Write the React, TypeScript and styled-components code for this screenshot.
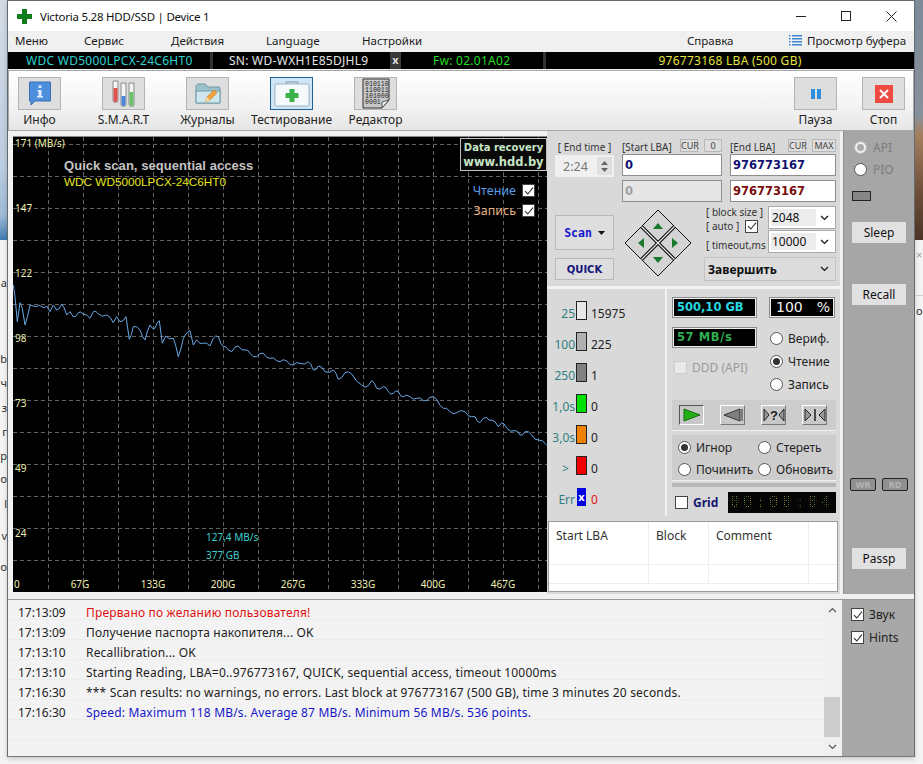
import React from "react"
import styled, { createGlobalStyle } from "styled-components"

const uiFont = `"Noto Sans", "Open Sans", sans-serif`
const monoBold = `"DejaVu Sans Mono", monospace`

const GlobalStyle = createGlobalStyle`
    html, body {
        margin: 0;
        padding: 0;
        background: #f4f4f4;
    }
    body {
        font-family: ${uiFont};
        font-size: 12px;
        color: #1c1c1c;
    }
`

const Page = styled.div`
    width: 923px;
    height: 764px;
    display: flex;
    overflow: hidden;
    background: #f4f4f4;
`

const LeftEdge = styled.div`
    width: 7px;
    display: flex;
    flex-direction: column;
    overflow: hidden;
`

const DesktopPhoto = styled.div`
    height: 240px;
    flex: none;
    background: linear-gradient(180deg, #d4dbe6 0%, #bccde0 70%, #9dbad5 90%, #3f7ab0 100%);
`

const RightEdge = styled.div`
    width: 8px;
    display: flex;
    flex-direction: column;
    overflow: hidden;
`

const WallPhoto = styled.div`
    height: 240px;
    flex: none;
    background: linear-gradient(180deg, #7d8a98 0%, #87919c 48%, #a5805f 56%, #6e4f3a 80%, #4b3426 100%);
`

const BehindText = styled.div<{ $gap: number }>`
    margin-top: ${p => p.$gap}px;
    height: 14px;
    width: 7px;
    flex: none;
    display: flex;
    justify-content: flex-end;
    line-height: 14px;
    font-size: 11px;
    color: #333;
    white-space: nowrap;
`

const BehindMark = styled.div<{ $gap: number; $color: string }>`
    margin-top: ${p => p.$gap}px;
    height: 14px;
    flex: none;
    padding-left: 1px;
    line-height: 14px;
    font-size: 11px;
    color: ${p => p.$color};
`

const BehindRule = styled.div<{ $gap: number }>`
    margin-top: ${p => p.$gap}px;
    height: 1px;
    flex: none;
    background: #cfcfcf;
`

const Window = styled.div`
    width: 908px;
    height: 757px;
    flex: none;
    display: flex;
    flex-direction: column;
    border: 1px solid #626a72;
    border-bottom: 1px solid #7a7a7a;
    box-sizing: border-box;
    background: #f0f0f0;
    box-shadow: 0 2px 5px rgba(0, 0, 0, 0.18);
`

const TitleBar = styled.div`
    height: 30px;
    flex: none;
    display: flex;
    align-items: center;
    background: #fff;
    padding-left: 9px;
`

const TitleText = styled.span`
    margin-left: 8px;
    font-size: 11.5px;
    letter-spacing: -0.25px;
    color: #111;
`

const WindowControls = styled.div`
    margin-left: auto;
    display: flex;
`

const WindowControl = styled.div`
    width: 45px;
    height: 30px;
    display: flex;
    align-items: center;
    justify-content: center;
`

const MenuBar = styled.div`
    height: 21px;
    flex: none;
    box-sizing: border-box;
    padding: 0 0 3px 7px;
    display: flex;
    align-items: center;
    background: #f0f0f0;
`

const MenuItem = styled.div<{ $width: number }>`
    width: ${p => p.$width}px;
    flex: none;
    display: flex;
    align-items: center;
    gap: 5px;
    font-size: 11.5px;
    color: #1a1a1a;
`

const DriveBar = styled.div`
    height: 17px;
    flex: none;
    display: flex;
    background: #000;
    font-size: 12px;
    letter-spacing: 0.27px;
    line-height: 17px;
    white-space: nowrap;
`

const DriveCell = styled.div<{ $width: number; $color: string; $pad?: number; $center?: boolean; $open?: boolean }>`
    width: ${p => p.$width}px;
    flex: none;
    box-sizing: border-box;
    color: ${p => p.$color};
    padding-left: ${p => p.$pad ?? 0}px;
    text-align: ${p => (p.$center ? "center" : "left")};
    border-right: ${p => (p.$open ? "0" : "3px solid #333")};
`

const EjectCell = styled.div`
    width: 11px;
    flex: none;
    background: #3a3a3a;
    color: #ddd;
    font-weight: 700;
    font-size: 11px;
    text-align: center;
    line-height: 16px;
`

const Toolbar = styled.div`
    height: 61px;
    flex: none;
    margin-top: 1px;
    display: flex;
    box-sizing: border-box;
    border: 1px solid #a8a8a8;
    padding: 6px 8px 0 9px;
    background: linear-gradient(180deg, #ffffff 0%, #f4f4f4 55%, #e6e6e6 100%);
`

const ToolGroup = styled.div`
    display: flex;
    gap: 41px;
`

const ToolGroupRight = styled(ToolGroup)`
    margin-left: auto;
    gap: 25px;
`

const ToolButton = styled.div`
    width: 43px;
    display: flex;
    flex-direction: column;
    align-items: center;
`

const ToolIcon = styled.div<{ $active?: boolean }>`
    width: 43px;
    height: 33px;
    box-sizing: border-box;
    display: flex;
    align-items: center;
    justify-content: center;
    background: ${p => (p.$active ? "#cfe5f8" : "#dedede")};
    border: 1px solid ${p => (p.$active ? "#1f5f94" : "#b4b4b4")};
`

const ToolLabel = styled.div`
    margin-top: 1px;
    font-size: 12px;
    line-height: 18px;
    white-space: nowrap;
    color: #222;
`

const Body = styled.div`
    height: 463px;
    flex: none;
    display: flex;
    background: #f2f2f2;
`

const ChartFrame = styled.div`
    width: 539px;
    flex: none;
    box-sizing: border-box;
    padding: 5px 0 2px 5px;
`

const Chart = styled.div`
    position: relative;
    width: 534px;
    height: 456px;
    background: #000;
    border-top: 1px solid #888;
    box-sizing: border-box;
    overflow: hidden;
`

const ChartTitle = styled.div`
    position: absolute;
    left: 51px;
    top: 21px;
    font-family: "Liberation Sans", sans-serif;
    font-weight: 700;
    font-size: 13px;
    letter-spacing: 0.05px;
    color: #c4c4c4;
`

const ChartDrive = styled.div`
    position: absolute;
    left: 51px;
    top: 38px;
    font-family: "Liberation Sans", sans-serif;
    font-size: 11.75px;
    color: #e6e61e;
`

const Promo = styled.div`
    position: absolute;
    right: 0;
    top: 1px;
    width: 87px;
    height: 33px;
    box-sizing: border-box;
    padding-top: 2px;
    border: 1px solid #c4c4c4;
    font-family: "DejaVu Sans", sans-serif;
    font-weight: 700;
    text-align: center;
    color: #c6e4c6;
    background: #0a0a0a;
`

const PromoSmall = styled.div`
    font-size: 10px;
    line-height: 14px;
`

const PromoBig = styled.div`
    font-size: 11.5px;
    line-height: 15px;
`

const LegendRow = styled.div<{ $top: number; $color: string }>`
    position: absolute;
    right: 12px;
    top: ${p => p.$top}px;
    display: flex;
    align-items: center;
    gap: 6px;
    font-size: 12.5px;
    color: ${p => p.$color};
`

const SpeedNote = styled.div<{ $top: number }>`
    position: absolute;
    left: 193px;
    top: ${p => p.$top}px;
    font-size: 10px;
    line-height: 14px;
    color: #3ccfcf;
`

const ControlColumn = styled.div`
    width: 293px;
    flex: none;
    display: flex;
    flex-direction: column;
    background: #d9d9d9;
`

const ScanPanel = styled.div`
    height: 158px;
    flex: none;
    box-sizing: border-box;
    padding-top: 8px;
    border-bottom: 3px solid #f2f2f2;
`

const PanelRow = styled.div`
    display: flex;
    padding-left: 8px;
`

const TimeCol = styled.div`
    width: 59px;
    flex: none;
    margin-right: 8px;
`

const LbaCol = styled.div<{ $width: number }>`
    width: ${p => p.$width}px;
    flex: none;
    margin-right: 8px;
    display: flex;
    flex-direction: column;
    gap: 4px;
`

const LbaHead = styled.div`
    height: 13px;
    display: flex;
    align-items: center;
    margin-bottom: -2px;
`

const SmallLabel = styled.span`
    font-size: 10px;
    line-height: 13px;
    color: #333;
    white-space: nowrap;
`

const HeadLabel = styled(SmallLabel)`
    padding-top: 3px;
`

const TimeLabel = styled(SmallLabel)`
    display: block;
    padding-top: 2px;
    text-align: center;
`

const TinyButton = styled.div<{ $width: number }>`
    width: ${p => p.$width}px;
    height: 13px;
    flex: none;
    margin-left: 6px;
    box-sizing: border-box;
    border: 1px solid #b8b8b8;
    background: #dedede;
    font-size: 9px;
    line-height: 11px;
    text-align: center;
    color: #444;
`

const HeadSpacer = styled.span`
    margin-left: auto;
`

const Spinner = styled.div`
    height: 22px;
    margin-top: 1px;
    box-sizing: border-box;
    display: flex;
    align-items: center;
    justify-content: space-between;
    padding: 0 2px 0 8px;
    background: #f0f0f0;
    font-size: 12.5px;
    color: #777;
`

const SpinArrows = styled.div`
    width: 15px;
    height: 18px;
    background: #e0e0e0;
    color: #666;
    display: flex;
    flex-direction: column;
    align-items: center;
    justify-content: center;
    gap: 3px;
`

const LbaInput = styled.div<{ $color: string; $disabled?: boolean }>`
    height: 22px;
    box-sizing: border-box;
    padding-left: 2px;
    border: 1px solid #8e8e8e;
    background: ${p => (p.$disabled ? "#e6e6e6" : "#fff")};
    font-family: "DejaVu Sans", sans-serif;
    font-weight: 700;
    font-size: 11.5px;
    line-height: 20px;
    color: ${p => p.$color};
`

const ActionRow = styled(PanelRow)`
    margin-top: 4px;
`

const ScanCol = styled.div`
    width: 59px;
    flex: none;
    padding-top: 9px;
    display: flex;
    flex-direction: column;
    gap: 8px;
`

const ScanButton = styled.div<{ $height: number; $color: string }>`
    height: ${p => p.$height}px;
    box-sizing: border-box;
    border: 1px solid #b8b8b8;
    background: #dedede;
    display: flex;
    align-items: center;
    justify-content: center;
    gap: 6px;
    font-family: ${monoBold};
    font-weight: 700;
    font-size: 11.5px;
    color: ${p => p.$color};
`

const QuickLabel = styled.span`
    font-family: "DejaVu Sans", sans-serif;
    font-size: 10px;
`

const Pad = styled.div`
    width: 68px;
    flex: none;
    margin: 3px 12px 0 10px;
`

const OptionCol = styled.div`
    width: 132px;
    flex: none;
`

const OptionTop = styled.div`
    display: flex;
`

const OptionLabels = styled.div`
    width: 64px;
    flex: none;
    margin-top: -1px;
    padding-left: 2px;
    box-sizing: border-box;
    display: flex;
    flex-direction: column;
`

const OptionLine = styled.div<{ $top: number }>`
    margin-top: ${p => p.$top}px;
    height: 14px;
    display: flex;
    align-items: center;
    gap: 6px;
`

const SelectStack = styled.div`
    width: 68px;
    flex: none;
    display: flex;
    flex-direction: column;
    gap: 1px;
`

const SelectBox = styled.div<{ $plain?: boolean }>`
    height: ${p => (p.$plain ? 24 : 23)}px;
    box-sizing: border-box;
    display: flex;
    align-items: center;
    justify-content: space-between;
    padding: 0 6px 0 ${p => (p.$plain ? 3 : 2)}px;
    border: 1px solid ${p => (p.$plain ? "#c4c4c4" : "#aaa")};
    background: ${p => (p.$plain ? "#dcdcdc" : "#fff")};
    font-size: 12px;
    font-weight: ${p => (p.$plain ? 700 : 400)};
    color: #111;
`

const SelectValue = styled.span`
    width: 45px;
    height: 17px;
    padding-left: 1px;
    box-sizing: border-box;
    line-height: 17px;
    background: #ececec;
`

const WideSelect = styled(SelectBox)`
    margin-top: 4px;
`

const StatusPanel = styled.div`
    height: 227px;
    flex: none;
    display: flex;
`

const BarList = styled.div`
    width: 120px;
    flex: none;
    box-sizing: border-box;
    padding-top: 6px;
    border-right: 2px solid #f2f2f2;
`

const BarRow = styled.div`
    height: 31px;
    display: flex;
    align-items: center;
`

const BarLabel = styled.span`
    width: 28px;
    flex: none;
    padding-top: 6px;
    text-align: right;
    font-size: 12px;
    color: #2f7f80;
    white-space: nowrap;
`

const BarSwatch = styled.div<{ $color: string }>`
    width: 11px;
    height: 19px;
    margin-left: 1px;
    flex: none;
    box-sizing: border-box;
    border: 1px solid #222;
    background: ${p => p.$color};
`

const ErrSwatch = styled.div`
    width: 9px;
    height: 18px;
    margin: 0 1px 0 2px;
    flex: none;
    background: #0000e0;
    color: #fff;
    font-weight: 700;
    font-size: 11px;
    line-height: 18px;
    text-align: center;
`

const BarValue = styled.span<{ $red?: boolean }>`
    margin-left: 4px;
    padding-top: 6px;
    font-size: 12px;
    color: ${p => (p.$red ? "#e01010" : "#222")};
`

const StatusRight = styled.div`
    flex: 1;
    box-sizing: border-box;
    padding: 8px 4px 0 5px;
    display: flex;
    flex-direction: column;
`

const MetricRow = styled.div`
    display: flex;
    justify-content: space-between;
    padding-right: 1px;
`

const Lcd = styled.div<{ $width: number; $color: string; $spacing?: number }>`
    width: ${p => p.$width}px;
    height: 21px;
    box-sizing: border-box;
    padding-left: 4px;
    border: 1px solid #8c8c8c;
    outline: 1px solid #eee;
    outline-offset: -2px;
    background: #000;
    font-family: "DejaVu Sans", sans-serif;
    font-weight: 700;
    font-size: 11.5px;
    letter-spacing: ${p => p.$spacing ?? 0}px;
    line-height: 19px;
    white-space: nowrap;
    color: ${p => p.$color};
`

const PercentLcd = styled(Lcd)`
    display: flex;
    justify-content: space-between;
    padding: 0 4px 0 6px;
    font-weight: 400;
    font-size: 14px;
`

const ReadMode = styled.div`
    margin-top: 9px;
    display: flex;
    justify-content: space-between;
`

const ModeLeft = styled.div`
    width: 85px;
`

const DddRow = styled.div`
    margin-top: 11px;
    padding-left: 2px;
    display: flex;
    align-items: center;
    gap: 5px;
    color: #9a9a9a;
    font-size: 12px;
`

const RadioStack = styled.div`
    width: 66px;
    display: flex;
    flex-direction: column;
`

const RadioRow = styled.div<{ $height?: number; $color?: string }>`
    height: ${p => p.$height ?? 23}px;
    display: flex;
    align-items: center;
    gap: 5px;
    font-size: 12px;
    color: ${p => p.$color ?? "#222"};
    white-space: nowrap;
`

const RadioDot = styled.span<{ $checked?: boolean; $muted?: boolean }>`
    width: 13px;
    height: 13px;
    flex: none;
    box-sizing: border-box;
    border-radius: 50%;
    border: 1px solid ${p => (p.$muted ? "#b8b8b8" : "#555")};
    background: ${p => (p.$muted ? "#eee" : "#fff")};
    display: flex;
    align-items: center;
    justify-content: center;
    &::after {
        content: "";
        width: 7px;
        height: 7px;
        border-radius: 50%;
        background: ${p => (p.$checked ? (p.$muted ? "#aaa" : "#333") : "transparent")};
    }
`

const Band = styled.div`
    background: #cdcdcd;
    border-bottom: 1px solid #f0f0f0;
    box-sizing: border-box;
`

const TransportBand = styled(Band)`
    height: 31px;
    margin-top: 4px;
    display: flex;
    align-items: center;
    gap: 16px;
    padding-left: 7px;
`

const TransportButton = styled.div<{ $active?: boolean }>`
    width: 25px;
    height: 20px;
    box-sizing: border-box;
    display: flex;
    align-items: center;
    justify-content: center;
    background: #c8c8c8;
    border-style: solid;
    border-width: 1px;
    border-color: ${p => (p.$active ? "#555 #fff #fff #555" : "#fff #777 #777 #fff")};
`

const ModeBand = styled(Band)`
    height: 46px;
    margin-top: 4px;
    display: grid;
    grid-template-columns: 80px 1fr;
    grid-auto-rows: 22px;
    padding: 1px 0 0 6px;
`

const ThinBand = styled.div`
    height: 4px;
    margin-top: 2px;
    background: #b6b6b6;
`

const GridRow = styled.div`
    margin-top: 5px;
    display: flex;
    align-items: center;
    padding-left: 3px;
`

const GridLabel = styled.span`
    margin-left: 5px;
    font-weight: 700;
    font-size: 12px;
    color: #15156e;
`

const LedClock = styled.div`
    position: relative;
    margin-left: auto;
    width: 108px;
    height: 21px;
    background: #050505;
    font-family: ${monoBold};
    font-size: 15px;
    line-height: 21px;
    letter-spacing: 4px;
    text-align: center;
    color: #8b8f3a;
    &::after {
        content: "";
        position: absolute;
        inset: 0;
        background-image:
            repeating-linear-gradient(90deg, transparent 0 1px, #050505 1px 2px),
            repeating-linear-gradient(180deg, transparent 0 1px, #050505 1px 2px);
    }
`

const BlockTable = styled.div`
    flex: 1;
    margin: 5px 2px 2px 1px;
    box-sizing: border-box;
    border: 1px solid #999;
    background: #fff;
`

const TableRow = styled.div<{ $height: number }>`
    height: ${p => p.$height}px;
    display: grid;
    grid-template-columns: 100px 60px 100px 1fr;
    border-bottom: 1px solid #eee;
`

const TableCell = styled.div`
    padding: 5px 0 0 7px;
    font-size: 12px;
    border-right: 1px solid #eee;
    color: #333;
    &:last-child {
        border-right: 0;
    }
`

const SidePanel = styled.div`
    width: 71px;
    flex: none;
    margin-left: 3px;
    box-sizing: border-box;
    padding: 5px 8px 0 8px;
    background: #a6a6a6;
    border-left: 1px solid #8c8c8c;
    display: flex;
    flex-direction: column;
`

const SideRadio = styled(RadioRow)`
    height: 22px;
    gap: 6px;
    padding-left: 2px;
    color: #7c7c7c;
`

const SideIndicator = styled.div`
    width: 19px;
    height: 10px;
    margin-top: 11px;
    box-sizing: border-box;
    border: 1px solid #222;
    background: #868686;
`

const SideButton = styled.div<{ $top: number }>`
    height: 21px;
    margin-top: ${p => p.$top}px;
    background: #e1e1e1;
    font-size: 12px;
    line-height: 21px;
    text-align: center;
    color: #111;
`

const PortRow = styled.div`
    margin-top: 173px;
    margin-left: -2px;
    display: flex;
    justify-content: space-between;
    width: 58px;
`

const PortChip = styled.div`
    width: 26px;
    height: 13px;
    box-sizing: border-box;
    border: 1px solid #222;
    border-radius: 2px;
    background: #909090;
    font-weight: 700;
    font-size: 9px;
    line-height: 11px;
    text-align: center;
    color: #b4b4b4;
`

const Footer = styled.div`
    height: 157px;
    flex: none;
    margin-top: 5px;
    box-sizing: border-box;
    border-top: 1px solid #9a9a9a;
    display: flex;
`

const LogPane = styled.div`
    width: 816px;
    flex: none;
    box-sizing: border-box;
    padding-top: 3px;
    background-color: #f3f3f3;
    background-image: repeating-linear-gradient(180deg, transparent 0 19px, #ececec 19px 20px);
`

const LogRow = styled.div<{ $color?: string }>`
    height: 20px;
    display: flex;
    font-size: 12px;
    letter-spacing: 0.17px;
    line-height: 20px;
    white-space: nowrap;
    color: ${p => p.$color ?? "#222"};
`

const LogTime = styled.span`
    width: 78px;
    flex: none;
    padding-left: 10px;
    box-sizing: border-box;
    letter-spacing: 0;
    color: #222;
`

const Scrollbar = styled.div`
    width: 16px;
    flex: none;
    display: flex;
    flex-direction: column;
    align-items: center;
    background: #f0f0f0;
    color: #555;
`

const ScrollArrow = styled.div<{ $height: number }>`
    height: ${p => p.$height}px;
    flex: none;
    display: flex;
    align-items: center;
`

const ScrollTrack = styled.div`
    flex: 1;
    width: 100%;
    display: flex;
    align-items: flex-end;
`

const ScrollThumb = styled.div`
    width: 100%;
    height: 40px;
    background: #cdcdcd;
`

const FooterSide = styled.div`
    width: 72px;
    flex: none;
    margin-left: 2px;
    box-sizing: border-box;
    padding: 3px 0 0 9px;
    background: #a8a8a8;
`

const SideCheck = styled.div`
    height: 23px;
    display: flex;
    align-items: center;
    gap: 5px;
    font-size: 12px;
    color: #222;
`

const Box = styled.span<{ $size?: number; $muted?: boolean }>`
    width: ${p => p.$size ?? 13}px;
    height: ${p => p.$size ?? 13}px;
    flex: none;
    box-sizing: border-box;
    display: inline-flex;
    align-items: center;
    justify-content: center;
    background: ${p => (p.$muted ? "#eaeaea" : "#fff")};
    border: 1px solid ${p => (p.$muted ? "#ccc" : "#444")};
`

const Check = ({ size, on = true, muted }: { size?: number; on?: boolean; muted?: boolean }) => (
    <Box $size={size} $muted={muted}>
        {on && (
            <svg width="10" height="10" viewBox="0 0 10 10" fill="none">
                <path d="M1 5.2 3.8 8 9 1.6" stroke="#333" strokeWidth="1.1" />
            </svg>
        )}
    </Box>
)

const Chevron = ({ up }: { up?: boolean }) => (
    <svg width="9" height="6" viewBox="0 0 9 6" fill="none">
        <path d={up ? "M1 5 4.5 1.5 8 5" : "M1 1 4.5 4.5 8 1"} stroke="currentColor" strokeWidth="1.2" />
    </svg>
)

const GreenCross = () => (
    <svg width="15" height="15" viewBox="0 0 15 15">
        <path d="M5 0h5v5h5v5h-5v5H5v-5H0V5h5z" fill="#0f7d1d" />
    </svg>
)

const InfoIcon = () => (
    <svg width="24" height="25" viewBox="0 0 24 25">
        <path d="M1.5 1h21v19H7l-4 4v-4H1.5z" fill="#4d8fdc" stroke="#3a6fb5" />
        <rect x="10.5" y="4.5" width="3" height="2.5" fill="#dfeeff" />
        <path d="M9.5 9h4v6h1.5v1.5H9V15h1.5v-4.500h-1z" fill="#dfeeff" />
    </svg>
)

const TubesIcon = () => (
    <svg width="28" height="28" viewBox="0 0 28 28">
        <path d="M3 1h5v19a2.500 2.500 0 0 1-5 0z" fill="#f4f4f4" stroke="#8a8a8a" />
        <path d="M3.500 8h4v12a2 2 0 0 1-4 0z" fill="#e2504e" />
        <path d="M11 3h5v21a2.500 2.500 0 0 1-5 0z" fill="#f4f4f4" stroke="#8a8a8a" />
        <path d="M11.500 16h4v8a2 2 0 0 1-4 0z" fill="#4a86d8" />
        <path d="M19 3h5v21a2.500 2.500 0 0 1-5 0z" fill="#f4f4f4" stroke="#8a8a8a" />
        <path d="M19.500 12h4v12a2 2 0 0 1-4 0z" fill="#6cc26c" />
    </svg>
)

const FolderIcon = () => (
    <svg width="26" height="24" viewBox="0 0 26 24">
        <path d="M1 5c0-2 1-3 3-3h6l3 3h11c1 0 1 1 1 1v15H1z" fill="#9cc2cc" stroke="#6f9aa6" />
        <path d="M1 9h24v12H1z" fill="#cfe6ec" stroke="#6f9aa6" />
        <path d="M10 20l2-5 7-7 3 3-7 7z" fill="#f0a23c" stroke="#c97f1d" strokeWidth="0.6" />
        <path d="M10 20l2-5 3 3z" fill="#f7e0b8" />
    </svg>
)

const CaseIcon = () => (
    <svg width="36" height="26" viewBox="0 0 36 26">
        <path d="M12 3V1h12v2" fill="none" stroke="#7d97a8" />
        <rect x="1" y="3" width="34" height="22" rx="1" fill="#f6fafc" stroke="#9bb2c2" />
        <path d="M15.500 8h5v4h4v5h-4v4h-5v-4h-4v-5h4z" fill="#38b44a" />
    </svg>
)

const BinaryIcon = () => (
    <svg width="30" height="31" viewBox="0 0 30 31">
        <path d="M2 1h26v21l-7 8H2z" fill="#c8c8c8" stroke="#333" />
        <path d="M28 22l-7 8v-6z" fill="#f2f2f2" stroke="#333" strokeWidth="0.8" />
        <text x="4" y="8" fontFamily="Liberation Mono, monospace" fontSize="6.6" fill="#222">010110</text>
        <text x="4" y="14" fontFamily="Liberation Mono, monospace" fontSize="6.6" fill="#222">110011</text>
        <text x="4" y="20" fontFamily="Liberation Mono, monospace" fontSize="6.6" fill="#222">101000</text>
        <text x="4" y="26" fontFamily="Liberation Mono, monospace" fontSize="6.6" fill="#222">0001</text>
    </svg>
)

const PauseIcon = () => (
    <svg width="12" height="12" viewBox="0 0 12 12">
        <rect x="1" y="1" width="4" height="10" fill="#2f8fe0" />
        <rect x="7" y="1" width="4" height="10" fill="#2f8fe0" />
    </svg>
)

const StopIcon = () => (
    <svg width="18" height="18" viewBox="0 0 18 18">
        <rect width="18" height="18" fill="#ee4a42" />
        <path d="M5 5l8 8M13 5l-8 8" stroke="#fff" strokeWidth="2" />
    </svg>
)

const ListIcon = () => (
    <svg width="13" height="13" viewBox="0 0 13 13" fill="#3b85d0">
        {[1, 4, 7, 10].map(y => (
            <React.Fragment key={y}>
                <rect x="0" y={y} width="1.500" height="1.500" />
                <rect x="3" y={y} width="10" height="1.500" />
            </React.Fragment>
        ))}
    </svg>
)

const MoveDiamond = () => (
    <svg width="68" height="68" viewBox="0 0 68 68" style={{ display: "block" }}>
        <path d="M34 1 67 34 34 67 1 34z" fill="#d4d4d4" stroke="#111" />
        <path d="M17.500 17.500 50.500 50.500M50.500 17.500 17.500 50.500" stroke="#111" strokeWidth="3.500" />
        <path d="M17.500 17.500 50.500 50.500M50.500 17.500 17.500 50.500" stroke="#eee" strokeWidth="1.200" />
        <path d="M34 14l5 6H29z M34 54l-5-6h10z M14 34l6-5v10z M54 34l-6-5v10z" fill="#177a2c" />
    </svg>
)

const PlayGlyph = () => (
    <svg width="18" height="14" viewBox="0 0 18 14">
        <path d="M1 1l16 6-16 6z" fill="#22b014" stroke="#14660e" />
    </svg>
)

const BackGlyph = () => (
    <svg width="20" height="14" viewBox="0 0 20 14">
        <path d="M1 7l16-6v12z" fill="#808080" stroke="#333" />
        <path d="M19 1v12" stroke="#333" />
    </svg>
)

const QueryGlyph = () => (
    <svg width="22" height="14" viewBox="0 0 22 14">
        <path d="M1 1l5 6-5 6zM21 1l-5 6 5 6z" fill="#999" stroke="#222" />
        <text x="11" y="12" textAnchor="middle" fontFamily="Liberation Sans, sans-serif" fontSize="13" fontWeight="700" fill="#222">?</text>
    </svg>
)

const MeetGlyph = () => (
    <svg width="22" height="14" viewBox="0 0 22 14">
        <path d="M1 1l6 6-6 6zM21 1l-6 6 6 6z" fill="#999" stroke="#222" />
        <path d="M11 1v12" stroke="#222" strokeWidth="1.500" />
    </svg>
)

const raw: [number, number][] = [
    [40, 465], [45, 500], [52, 575], [60, 518], [67, 535], [75, 585], [90, 525], [100, 528], [110, 530], [125, 530],
    [140, 528], [150, 545], [160, 525], [170, 540], [185, 522], [200, 555], [210, 545], [220, 560], [235, 548], [250, 553],
    [260, 555], [270, 565], [280, 545], [295, 552], [320, 555], [340, 578], [350, 560], [360, 575], [378, 560], [388, 628],
    [400, 590], [420, 600], [435, 630], [450, 585], [465, 595], [478, 572], [487, 640], [497, 618], [520, 625], [535, 680],
    [550, 625], [570, 602], [580, 645], [590, 630], [610, 640], [630, 648], [640, 625], [655, 620], [670, 650], [685, 660],
    [695, 665], [715, 648], [735, 660], [750, 670], [770, 680], [790, 670], [810, 685], [830, 692],
]

const rawEnd: [number, number][] = [
    [0, 5], [20, 3], [40, 15], [60, 10], [85, 5], [100, 30], [115, 18], [135, 35], [160, 30], [175, 58], [195, 38], [215, 42],
    [245, 75], [255, 82], [275, 62], [290, 85], [310, 80], [325, 95], [340, 100], [355, 95], [370, 110], [390, 110], [410, 115],
    [430, 122], [450, 112], [470, 118], [490, 145], [510, 155], [530, 158], [555, 155], [575, 170], [585, 170], [600, 188],
    [620, 172], [635, 180], [655, 200], [665, 188], [680, 205], [705, 212], [720, 225], [735, 215], [755, 225], [775, 240], [800, 255],
]

// zoomed-crop coordinates brought back to chart space (chart origin 13,137)
const knots = [
    ...raw.map(([x, y]) => [x / 3 - 13, y / 3 + 130 - 137]),
    ...rawEnd.map(([x, y]) => [x / 3 + 280 - 13, y / 3 + 360 - 137]),
]

// the real trace is jagged between the read points, so zigzag the long segments
const curve = knots
    .flatMap(([x, y], i) => {
        const next = knots[i + 1]
        if (!next || next[0] - x < 4) return [[x, y]]
        return [[x, y], [(x + next[0]) / 2, (y + next[1]) / 2 + (i % 2 ? 1.6 : -1.6)]]
    })
    .map(([x, y]) => `${x.toFixed(1)},${y.toFixed(1)}`)
    .join(" ")

const gridX = [35.5, 70.5, 105.5, 140.5, 175.5, 210.5, 245.5, 280.5, 315.5, 350.5, 385.5, 420.5, 455.5, 490.5, 525.5]
const gridY = [7.5, 39.5, 71.5, 103.5, 135.5, 167.5, 199.5, 231.5, 263.5, 295.5, 327.5, 359.5, 391.5, 423.5]

const yTicks = [
    { y: 75, t: "147" },
    { y: 140, t: "122" },
    { y: 205, t: "98" },
    { y: 270, t: "73" },
    { y: 335, t: "49" },
    { y: 400, t: "24" },
]

const xTicks = [
    { x: 67, t: "67G" },
    { x: 140, t: "133G" },
    { x: 210, t: "200G" },
    { x: 280, t: "267G" },
    { x: 350, t: "333G" },
    { x: 420, t: "400G" },
    { x: 490, t: "467G" },
]

const SpeedChart = () => (
    <svg width="534" height="455" viewBox="0 0 534 455" style={{ display: "block" }}>
        <g stroke="#626262" strokeWidth="1" strokeDasharray="4 3">
            {gridX.map(x => (
                <line key={x} x1={x} y1="0" x2={x} y2="455" />
            ))}
            {gridY.map(y => (
                <line key={y} x1="0" y1={y} x2="534" y2={y} />
            ))}
        </g>
        <polyline points={curve} fill="none" stroke="#6aa8e6" strokeWidth="1" />
        <g fontFamily="Noto Sans, sans-serif" fontSize="10" fill="#efefb0">
            <text x="2" y="10">171 (MB/s)</text>
            {yTicks.map(t => (
                <text key={t.t} x="2" y={t.y}>{t.t}</text>
            ))}
            <text x="1" y="451">0</text>
            {xTicks.map(t => (
                <text key={t.t} x={t.x} y="451" textAnchor="middle">{t.t}</text>
            ))}
        </g>
    </svg>
)

const logRows = [
    { time: "17:13:09", text: "Прервано по желанию пользователя!", color: "#e01010" },
    { time: "17:13:09", text: "Получение паспорта накопителя... OK" },
    { time: "17:13:10", text: "Recallibration... OK" },
    { time: "17:13:10", text: "Starting Reading, LBA=0..976773167, QUICK, sequential access, timeout 10000ms" },
    { time: "17:16:30", text: "*** Scan results: no warnings, no errors. Last block at 976773167 (500 GB), time 3 minutes 20 seconds." },
    { time: "17:16:30", text: "Speed: Maximum 118 MB/s. Average 87 MB/s. Minimum 56 MB/s. 536 points.", color: "#1616c8" },
]

const bars = [
    { label: "25", color: "#e8e8e8", value: "15975" },
    { label: "100", color: "#b0b0b0", value: "225" },
    { label: "250", color: "#808080", value: "1" },
    { label: "1,0s", color: "#00e000", value: "0" },
    { label: "3,0s", color: "#f08000", value: "0" },
    { label: ">\u00a0\u00a0", color: "#f00000", value: "0" },
]

const behind = [
    { gap: 36, text: "a" },
    { gap: 62, text: "b" },
    { gap: 10, text: "ч" },
    { gap: 11, text: "з" },
    { gap: 10, text: "г" },
    { gap: 10, text: "р" },
    { gap: 9, text: "о" },
    { gap: 11, text: "l" },
    { gap: 18, text: "v" },
    { gap: 17, text: "о" },
]

const App = () => {
    return (
        <Page>
            <GlobalStyle />
            <LeftEdge>
                <DesktopPhoto />
                {behind.map((b, i) => (
                    <BehindText key={i} $gap={b.gap}>{b.text}</BehindText>
                ))}
            </LeftEdge>
            <Window>
                <TitleBar>
                    <GreenCross />
                    <TitleText>Victoria 5.28 HDD/SSD | Device 1</TitleText>
                    <WindowControls>
                        <WindowControl>
                            <svg width="11" height="11" viewBox="0 0 11 11"><path d="M0 5.500h10" stroke="#222" /></svg>
                        </WindowControl>
                        <WindowControl>
                            <svg width="11" height="11" viewBox="0 0 11 11"><rect x="0.500" y="0.500" width="9" height="9" fill="none" stroke="#222" /></svg>
                        </WindowControl>
                        <WindowControl>
                            <svg width="11" height="11" viewBox="0 0 11 11"><path d="M0.500 0.500l10 10M10.500 0.500l-10 10" stroke="#222" /></svg>
                        </WindowControl>
                    </WindowControls>
                </TitleBar>
                <MenuBar>
                    <MenuItem $width={69}>Меню</MenuItem>
                    <MenuItem $width={87}>Сервис</MenuItem>
                    <MenuItem $width={95}>Действия</MenuItem>
                    <MenuItem $width={96}>Language</MenuItem>
                    <MenuItem $width={325}>Настройки</MenuItem>
                    <MenuItem $width={102}>Справка</MenuItem>
                    <MenuItem $width={120}><ListIcon />Просмотр буфера</MenuItem>
                </MenuBar>
                <DriveBar>
                    <DriveCell $width={205} $color="#2fd2d2" $pad={18}>WDC WD5000LPCX-24C6HT0</DriveCell>
                    <DriveCell $width={177} $color="#e6e6e6" $pad={16} $open>SN: WD-WXH1E85DJHL9</DriveCell>
                    <EjectCell>x</EjectCell>
                    <DriveCell $width={145} $color="#22dd22" $pad={32}>Fw: 02.01A02</DriveCell>
                    <DriveCell $width={368} $color="#e6e63c" $center $open>976773168 LBA (500 GB)</DriveCell>
                </DriveBar>
                <Toolbar>
                    <ToolGroup>
                        <ToolButton>
                            <ToolIcon><InfoIcon /></ToolIcon>
                            <ToolLabel>Инфо</ToolLabel>
                        </ToolButton>
                        <ToolButton>
                            <ToolIcon><TubesIcon /></ToolIcon>
                            <ToolLabel>S.M.A.R.T</ToolLabel>
                        </ToolButton>
                        <ToolButton>
                            <ToolIcon><FolderIcon /></ToolIcon>
                            <ToolLabel>Журналы</ToolLabel>
                        </ToolButton>
                        <ToolButton>
                            <ToolIcon $active><CaseIcon /></ToolIcon>
                            <ToolLabel>Тестирование</ToolLabel>
                        </ToolButton>
                        <ToolButton>
                            <ToolIcon><BinaryIcon /></ToolIcon>
                            <ToolLabel>Редактор</ToolLabel>
                        </ToolButton>
                    </ToolGroup>
                    <ToolGroupRight>
                        <ToolButton>
                            <ToolIcon><PauseIcon /></ToolIcon>
                            <ToolLabel>Пауза</ToolLabel>
                        </ToolButton>
                        <ToolButton>
                            <ToolIcon><StopIcon /></ToolIcon>
                            <ToolLabel>Стоп</ToolLabel>
                        </ToolButton>
                    </ToolGroupRight>
                </Toolbar>
                <Body>
                    <ChartFrame>
                        <Chart>
                            <SpeedChart />
                            <ChartTitle>Quick scan, sequential access</ChartTitle>
                            <ChartDrive>WDC WD5000LPCX-24C6HT0</ChartDrive>
                            <Promo>
                                <PromoSmall>Data recovery</PromoSmall>
                                <PromoBig>www.hdd.by</PromoBig>
                            </Promo>
                            <LegendRow $top={45} $color="#5b9ce6">Чтение <Check /></LegendRow>
                            <LegendRow $top={65} $color="#e2b284">Запись <Check /></LegendRow>
                            <SpeedNote $top={393}>127,4 MB/s</SpeedNote>
                            <SpeedNote $top={411}>377 GB</SpeedNote>
                        </Chart>
                    </ChartFrame>
                    <ControlColumn>
                        <ScanPanel>
                            <PanelRow>
                                <TimeCol>
                                    <TimeLabel>[ End time ]</TimeLabel>
                                    <Spinner>
                                        2:24
                                        <SpinArrows>
                                            <svg width="7" height="4" viewBox="0 0 7 4"><path d="M3.500 0 7 4H0z" fill="currentColor" /></svg>
                                            <svg width="7" height="4" viewBox="0 0 7 4"><path d="M3.500 4 0 0h7z" fill="currentColor" /></svg>
                                        </SpinArrows>
                                    </Spinner>
                                </TimeCol>
                                <LbaCol $width={100}>
                                    <LbaHead>
                                        <HeadLabel>[Start LBA]</HeadLabel>
                                        <HeadSpacer />
                                        <TinyButton $width={18}>CUR</TinyButton>
                                        <TinyButton $width={18}>0</TinyButton>
                                    </LbaHead>
                                    <LbaInput $color="#101070">0</LbaInput>
                                    <LbaInput $color="#a0a0a0" $disabled>0</LbaInput>
                                </LbaCol>
                                <LbaCol $width={106}>
                                    <LbaHead>
                                        <HeadLabel>[End LBA]</HeadLabel>
                                        <HeadSpacer />
                                        <TinyButton $width={18}>CUR</TinyButton>
                                        <TinyButton $width={24}>MAX</TinyButton>
                                    </LbaHead>
                                    <LbaInput $color="#101070">976773167</LbaInput>
                                    <LbaInput $color="#7a0c0c">976773167</LbaInput>
                                </LbaCol>
                            </PanelRow>
                            <ActionRow>
                                <ScanCol>
                                    <ScanButton $height={35} $color="#1515d0">
                                        Scan
                                        <svg width="7" height="4" viewBox="0 0 7 4"><path d="M0 0h7L3.500 4z" fill="#111" /></svg>
                                    </ScanButton>
                                    <ScanButton $height={22} $color="#14147a"><QuickLabel>QUICK</QuickLabel></ScanButton>
                                </ScanCol>
                                <Pad><MoveDiamond /></Pad>
                                <OptionCol>
                                    <OptionTop>
                                        <OptionLabels>
                                            <OptionLine $top={0}><SmallLabel>[ block size ]</SmallLabel></OptionLine>
                                            <OptionLine $top={0}><SmallLabel>[ auto ]</SmallLabel><Check /></OptionLine>
                                            <OptionLine $top={5}><SmallLabel>[ timeout,ms ]</SmallLabel></OptionLine>
                                        </OptionLabels>
                                        <SelectStack>
                                            <SelectBox><SelectValue>2048</SelectValue><Chevron /></SelectBox>
                                            <SelectBox><SelectValue>10000</SelectValue><Chevron /></SelectBox>
                                        </SelectStack>
                                    </OptionTop>
                                    <WideSelect $plain>Завершить<Chevron /></WideSelect>
                                </OptionCol>
                            </ActionRow>
                        </ScanPanel>
                        <StatusPanel>
                            <BarList>
                                {bars.map(b => (
                                    <BarRow key={b.label}>
                                        <BarLabel>{b.label}</BarLabel>
                                        <BarSwatch $color={b.color} />
                                        <BarValue>{b.value}</BarValue>
                                    </BarRow>
                                ))}
                                <BarRow>
                                    <BarLabel>Err</BarLabel>
                                    <ErrSwatch>x</ErrSwatch>
                                    <BarValue $red>0</BarValue>
                                </BarRow>
                            </BarList>
                            <StatusRight>
                                <MetricRow>
                                    <Lcd $width={85} $color="#28d8e0">500,10 GB</Lcd>
                                    <PercentLcd $width={66} $color="#f0f0f0"><span>100</span><span>%</span></PercentLcd>
                                </MetricRow>
                                <ReadMode>
                                    <ModeLeft>
                                        <Lcd $width={85} $color="#2fae52" $spacing={0.6}>57 MB/s</Lcd>
                                        <DddRow><Check on={false} muted />DDD (API)</DddRow>
                                    </ModeLeft>
                                    <RadioStack>
                                        <RadioRow><RadioDot />Вериф.</RadioRow>
                                        <RadioRow><RadioDot $checked />Чтение</RadioRow>
                                        <RadioRow><RadioDot />Запись</RadioRow>
                                    </RadioStack>
                                </ReadMode>
                                <TransportBand>
                                    <TransportButton $active><PlayGlyph /></TransportButton>
                                    <TransportButton><BackGlyph /></TransportButton>
                                    <TransportButton><QueryGlyph /></TransportButton>
                                    <TransportButton><MeetGlyph /></TransportButton>
                                </TransportBand>
                                <ModeBand>
                                    <RadioRow $height={22}><RadioDot $checked />Игнор</RadioRow>
                                    <RadioRow $height={22}><RadioDot />Стереть</RadioRow>
                                    <RadioRow $height={22}><RadioDot />Починить</RadioRow>
                                    <RadioRow $height={22}><RadioDot />Обновить</RadioRow>
                                </ModeBand>
                                <ThinBand />
                                <GridRow>
                                    <Check on={false} />
                                    <GridLabel>Grid</GridLabel>
                                    <LedClock>00:00:04</LedClock>
                                </GridRow>
                            </StatusRight>
                        </StatusPanel>
                        <BlockTable>
                            <TableRow $height={42}>
                                <TableCell>Start LBA</TableCell>
                                <TableCell>Block</TableCell>
                                <TableCell>Comment</TableCell>
                                <TableCell />
                            </TableRow>
                            <TableRow $height={18}>
                                <TableCell /><TableCell /><TableCell /><TableCell />
                            </TableRow>
                        </BlockTable>
                    </ControlColumn>
                    <SidePanel>
                        <SideRadio><RadioDot $checked $muted />API</SideRadio>
                        <SideRadio><RadioDot />PIO</SideRadio>
                        <SideIndicator />
                        <SideButton $top={21}>Sleep</SideButton>
                        <SideButton $top={41}>Recall</SideButton>
                        <PortRow>
                            <PortChip>WR</PortChip>
                            <PortChip>RD</PortChip>
                        </PortRow>
                        <SideButton $top={57}>Passp</SideButton>
                    </SidePanel>
                </Body>
                <Footer>
                    <LogPane>
                        {logRows.map((r, i) => (
                            <LogRow key={i} $color={r.color}>
                                <LogTime>{r.time}</LogTime>
                                {r.text}
                            </LogRow>
                        ))}
                    </LogPane>
                    <Scrollbar>
                        <ScrollArrow $height={20}><Chevron up /></ScrollArrow>
                        <ScrollTrack><ScrollThumb /></ScrollTrack>
                        <ScrollArrow $height={19}><Chevron /></ScrollArrow>
                    </Scrollbar>
                    <FooterSide>
                        <SideCheck><Check />Звук</SideCheck>
                        <SideCheck><Check />Hints</SideCheck>
                    </FooterSide>
                </Footer>
            </Window>
            <RightEdge>
                <WallPhoto />
                <BehindMark $gap={8} $color="#9a9a9a">×</BehindMark>
                <BehindRule $gap={33} />
                <BehindMark $gap={8} $color="#333">о</BehindMark>
            </RightEdge>
        </Page>
    )
}

export default App
